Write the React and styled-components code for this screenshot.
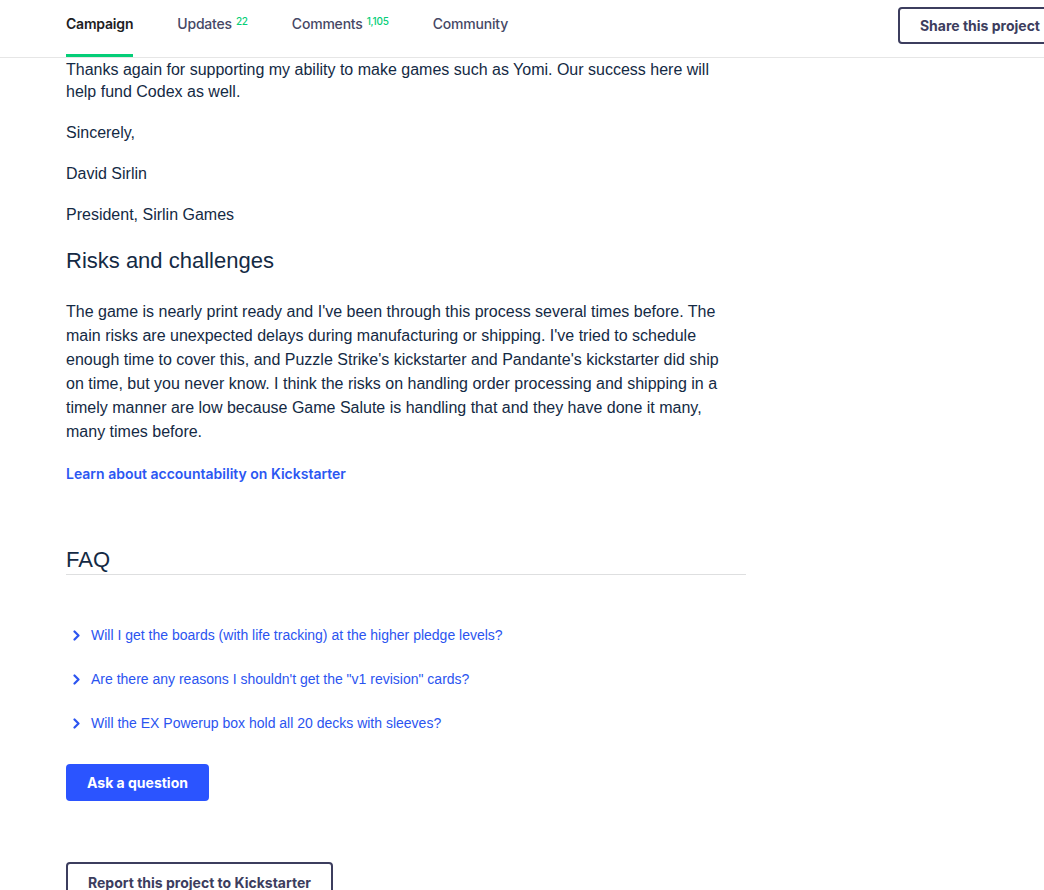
import React from "react";
import styled, { createGlobalStyle } from "styled-components";

const GlobalStyle = createGlobalStyle`
  html, body {
    margin: 0;
    padding: 0;
    background: #fff;
    overflow-x: hidden;
  }
  body {
    font-family: "Liberation Sans", Arial, sans-serif;
  }
`;

const tabs = [
  { label: "Campaign", active: true },
  { label: "Updates", count: "22" },
  { label: "Comments", count: "1,105" },
  { label: "Community" },
];

const faqs = [
  "Will I get the boards (with life tracking) at the higher pledge levels?",
  'Are there any reasons I shouldn\'t get the "v1 revision" cards?',
  "Will the EX Powerup box hold all 20 decks with sleeves?",
];

const Chevron = () => (
  <svg width="8" height="11" viewBox="0 0 8 11" aria-hidden="true">
    <path
      d="M1.5 1.5 L5.5 5.5 L1.5 9.5"
      fill="none"
      stroke="#2b54f0"
      strokeWidth="2.2"
      strokeLinecap="round"
      strokeLinejoin="round"
    />
  </svg>
);

const App = () => {
  return (
    <Page>
      <GlobalStyle />
      <Header>
        <Tabs>
          {tabs.map((tab) => (
            <Tab key={tab.label} active={tab.active}>
              {tab.label}
              {tab.count && <Count>{tab.count}</Count>}
            </Tab>
          ))}
        </Tabs>
        <ShareButton>Share this project</ShareButton>
      </Header>

      <Content>
        <Paragraph>
          Thanks again for supporting my ability to make games such as Yomi. Our
          success here will help fund Codex as well.
        </Paragraph>
        <Paragraph>Sincerely,</Paragraph>
        <Paragraph>David Sirlin</Paragraph>
        <Paragraph>President, Sirlin Games</Paragraph>

        <SectionTitle>Risks and challenges</SectionTitle>
        <RiskText>
          The game is nearly print ready and I've been through this process
          several times before. The main risks are unexpected delays during
          manufacturing or shipping. I've tried to schedule enough time to cover
          this, and Puzzle Strike's kickstarter and Pandante's kickstarter did
          ship on time, but you never know. I think the risks on handling order
          processing and shipping in a timely manner are low because Game Salute
          is handling that and they have done it many, many times before.
        </RiskText>
        <LearnLink href="#">Learn about accountability on Kickstarter</LearnLink>

        <FaqTitle>FAQ</FaqTitle>
        <FaqList>
          {faqs.map((q) => (
            <FaqItem key={q}>
              <Chevron />
              <span>{q}</span>
            </FaqItem>
          ))}
        </FaqList>

        <AskButton>Ask a question</AskButton>
        <ReportButton>Report this project to Kickstarter</ReportButton>
      </Content>
    </Page>
  );
};

const Page = styled.div`
  width: 100%;
  min-height: 890px;
`;

const Header = styled.header`
  display: flex;
  align-items: flex-start;
  height: 57px;
  border-bottom: 1px solid #e6e6e6;
  padding-left: 66px;
`;

const Tabs = styled.nav`
  display: flex;
  gap: 44px;
  flex: 1;
`;

const Tab = styled.a`
  display: flex;
  align-items: flex-start;
  height: 39px;
  padding-top: 15px;
  font-family: Inter, "Liberation Sans", sans-serif;
  font-size: 14px;
  line-height: 18px;
  font-weight: ${(p) => (p.active ? 600 : 500)};
  color: ${(p) => (p.active ? "#1d1d1f" : "#464866")};
  border-bottom: 3px solid ${(p) => (p.active ? "#05ce78" : "transparent")};
  letter-spacing: -0.2px;
`;

const Count = styled.sup`
  font-size: 10px;
  line-height: 10px;
  color: #05ce78;
  margin-left: 4px;
  position: relative;
  top: 1px;
  font-weight: 500;
`;

const ShareButton = styled.button`
  margin-top: 7px;
  margin-right: -18px;
  height: 37px;
  padding: 0 20px;
  background: #fff;
  border: 2px solid #3c3d5e;
  border-radius: 4px;
  font-family: Inter, "Liberation Sans", sans-serif;
  font-size: 14px;
  font-weight: 700;
  color: #3c3d5e;
  white-space: nowrap;
  flex-shrink: 0;
`;

const Content = styled.main`
  width: 664px;
  margin-left: 66px;
  padding-top: 1px;
  color: #142a44;
`;

const Paragraph = styled.p`
  margin: 0 0 19px;
  font-size: 16px;
  line-height: 22px;
`;

const SectionTitle = styled.h2`
  margin: 0 0 24px;
  padding-top: 1px;
  font-size: 22px;
  line-height: 30px;
  font-weight: 400;
  color: #142a44;
`;

const RiskText = styled.p`
  margin: 0 0 20px;
  font-size: 16px;
  line-height: 24px;
`;

const LearnLink = styled.a`
  display: block;
  font-family: Inter, "Liberation Sans", sans-serif;
  font-size: 14px;
  line-height: 20px;
  font-weight: 600;
  color: #2b57f2;
  text-decoration: none;
`;

const FaqTitle = styled.h2`
  width: 680px;
  margin: 62px 0 0;
  padding-bottom: 0;
  font-size: 22px;
  line-height: 28px;
  font-weight: 400;
  color: #142a44;
  border-bottom: 1px solid #dedfe0;
`;

const FaqList = styled.ul`
  list-style: none;
  margin: 50px 0 0;
  padding: 0;
  display: flex;
  flex-direction: column;
  gap: 24px;
`;

const FaqItem = styled.li`
  display: flex;
  align-items: center;
  gap: 10px;
  padding-left: 7px;
  height: 20px;
  font-size: 14px;
  color: #2b54f0;
`;

const AskButton = styled.button`
  display: block;
  margin-top: 31px;
  height: 37px;
  padding: 0 21px;
  border: none;
  border-radius: 4px;
  background: #2b54ff;
  color: #fff;
  font-family: Inter, "Liberation Sans", sans-serif;
  font-size: 14px;
  font-weight: 700;
`;

const ReportButton = styled.button`
  display: block;
  margin-top: 61px;
  height: 40px;
  padding: 0 20px;
  background: #fff;
  border: 2px solid #3c3d5e;
  border-radius: 4px;
  font-family: Inter, "Liberation Sans", sans-serif;
  font-size: 14px;
  font-weight: 700;
  color: #3c3d5e;
`;

export default App;
